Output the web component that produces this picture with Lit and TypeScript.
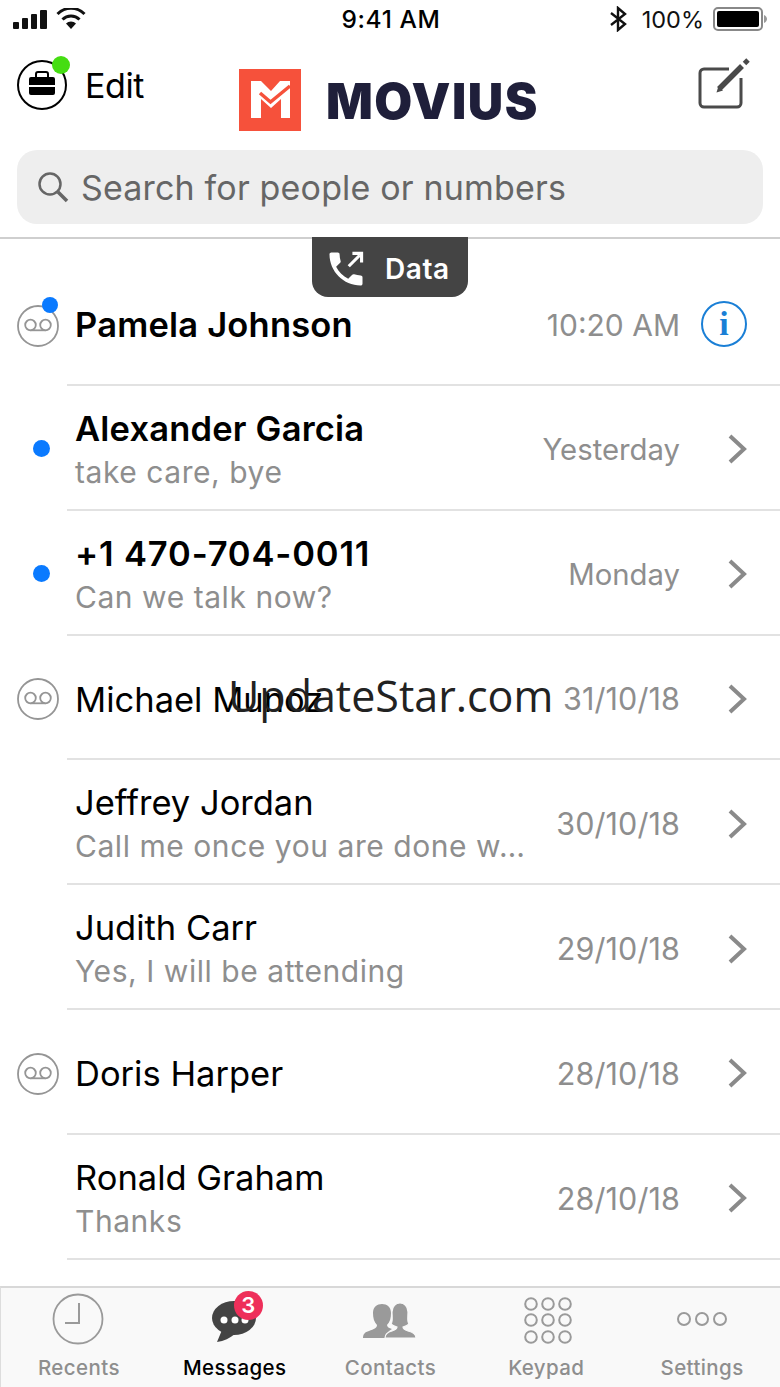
import { LitElement, html, css, svg } from "lit";
import { customElement } from "lit/decorators.js";

const voicemail = html`<svg class="vm" width="42" height="42" viewBox="0 0 42 42" fill="none" stroke="#959595" stroke-width="1.800"><circle cx="21" cy="21" r="20"/><circle cx="13.500" cy="20" r="5.300"/><circle cx="28.500" cy="20" r="5.300"/><path d="M13.500 25.300h15"/></svg>`;
const chevron = html`<svg class="trail" width="100" height="30" viewBox="0 0 100 30" fill="none" stroke="#8a8a8a" stroke-width="4"><path d="M50 2l14 13-14 13"/></svg>`;
const info = html`<div class="info-wrap"><div class="info">i</div></div>`;

interface Row { name: string; sub?: string; date: string; bold?: boolean; mark?: "vm" | "dot"; }
const rows: Row[] = [
  { name: "Alexander Garcia", sub: "take care, bye", date: "Yesterday", bold: true, mark: "dot" },
  { name: "+1 470-704-0011", sub: "Can we talk now?", date: "Monday", bold: true, mark: "dot" },
  { name: "Michael Munoz", date: "31/10/18", mark: "vm" },
  { name: "Jeffrey Jordan", sub: "Call me once you are done w…", date: "30/10/18" },
  { name: "Judith Carr", sub: "Yes, I will be attending", date: "29/10/18" },
  { name: "Doris Harper", date: "28/10/18", mark: "vm" },
  { name: "Ronald Graham", sub: "Thanks", date: "28/10/18" },
];

@customElement("app-root")
export class AppRoot extends LitElement {
  static styles = css`
    :host { display: block; width: 780px; height: 1387px; position: relative; overflow: hidden; background: #fff; font-family: Inter, "Liberation Sans", sans-serif; color: #000; }
    .status { height: 38px; display: grid; grid-template-columns: 1fr auto 1fr; align-items: center; padding: 0 11px 0 13px; box-sizing: border-box; }
    .status-left { display: flex; align-items: center; gap: 8px; }
    .time { font-size: 24.500px; font-weight: 500; letter-spacing: 0.6px; }
    .status-right { display: flex; justify-content: flex-end; align-items: center; gap: 10px; font-size: 23.500px; color: #111; }
    .status-right span { margin-left: 5px; }
    .status-right .batt { margin-left: -1px; }
    .nav { height: 112px; display: flex; align-items: flex-start; padding-left: 17px; box-sizing: border-box; }
    .brief { position: relative; width: 50px; height: 50px; margin-top: 22px; flex: none; }
    .green { position: absolute; left: 35px; top: -4px; width: 18px; height: 18px; border-radius: 50%; background: #45dd12; }
    .edit { font-size: 34px; margin: 29px 0 0 18px; width: 154px; line-height: 38px; letter-spacing: -0.4px; flex: none; }
    .logo { display: flex; align-items: center; margin-top: 31px; flex: none; width: 459px; }
    .wordmark { font-size: 49px; font-weight: 900; color: #1f1f3a; margin-left: 25px; padding-top: 3px; line-height: 59px; letter-spacing: 1.500px; }
    .search { margin: 0 17px; height: 74px; border-radius: 20px; background: #eeeeee; display: flex; align-items: center; padding-left: 20px; box-sizing: border-box; gap: 12px; color: #666; font-size: 34px; letter-spacing: 0.17px; }
    .list { margin-top: 13px; border-top: 2px solid #cfcfcf; position: relative; }
    .row { display: flex; height: 124.800px; box-sizing: border-box; }
    .row.first { height: 147px; }
    .mark { width: 67px; flex: none; position: relative; display: flex; align-items: center; padding: 3px 0 0 17px; box-sizing: border-box; }
    .first .mark { padding-top: 26px; }
    .main { flex: 1; display: flex; align-items: center; border-bottom: 2px solid #e2e2e2; padding: 4px 0 0 8px; min-width: 0; }
    .first .main { padding-top: 24px; }
    .text { flex: 1; min-width: 0; padding-top: 3px; }
    .name { font-size: 34.500px; line-height: 43px; margin: -1px 0 1px; white-space: nowrap; }
    .bold .name { font-weight: 600; letter-spacing: 0.2px; }
    .bold .name.phone { letter-spacing: 0.85px; }
    .sub { font-size: 30px; line-height: 43px; color: #8e8e8e; letter-spacing: 0.55px; white-space: nowrap; }
    .date { font-size: 29.300px; color: #8e8e8e; white-space: nowrap; }
    .date.numeric { font-size: 30.500px; letter-spacing: 0.1px; }
    .first .date { font-size: 30px; padding-top: 2px; }
    .trail { flex: none; }
    .info-wrap { width: 100px; flex: none; display: flex; justify-content: flex-end; padding-right: 33px; box-sizing: border-box; }
    .info { width: 42px; height: 42px; border: 2px solid #1a7fd6; border-radius: 50%; color: #1a7fd6; font-family: "Liberation Serif", serif; font-weight: 700; font-size: 34px; line-height: 42px; text-align: center; }
    .dot { position: absolute; width: 17px; height: 17px; border-radius: 50%; background: #0a7aff; left: 33px; top: 54px; }
    .vmdot { left: 42px; top: 58px; width: 16px; height: 16px; }
    .badge { position: absolute; left: 312px; top: -2px; width: 156px; height: 60px; background: #444; border-radius: 0 0 16px 16px; color: #fff; display: flex; align-items: center; gap: 17px; padding: 3px 0 0 12px; box-sizing: border-box; font-size: 28px; font-weight: 600; letter-spacing: 0.6px; }
    .water { position: absolute; left: 228px; top: 666px; font-family: "Open Sans", sans-serif; font-size: 43px; line-height: 60px; color: #222; white-space: nowrap; }
    .tabs { position: absolute; left: 0; right: 0; bottom: 0; height: 101px; background: #f9f9f9; border-top: 2px solid #d8d8d8; border-left: 1px solid #ddd; box-sizing: border-box; display: grid; grid-template-columns: repeat(5, 1fr); }
    .tab { display: flex; flex-direction: column; align-items: center; color: #8e8e8e; font-size: 20.500px; font-weight: 500; letter-spacing: 0.4px; position: relative; }
    .tab.on { color: #000; }
    .tab svg { height: 60px; width: 70px; flex: none; margin-top: 2px; }
    .tab span { line-height: 26px; margin-top: 5px; }
    .count { position: absolute; left: 77px; top: 3px; width: 29px; height: 29px; border-radius: 50%; background: #ee2f5a; color: #fff; font-size: 22px; font-weight: 600; line-height: 29px; text-align: center; letter-spacing: 0; }
    .compose { flex: none; margin-top: 21px; overflow: visible; }
  `;

  private rowTpl(r: Row) {
    const numericDate = /^\d/.test(r.date);
    const phone = r.name.startsWith("+");
    return html`<div class="row ${r.bold ? "bold" : ""}">
      <div class="mark">${r.mark === "vm" ? voicemail : ""}${r.mark === "dot" ? html`<div class="dot"></div>` : ""}</div>
      <div class="main">
        <div class="text"><div class="name ${phone ? "phone" : ""}">${r.name}</div>${r.sub ? html`<div class="sub">${r.sub}</div>` : ""}</div>
        <div class="date ${numericDate ? "numeric" : ""}">${r.date}</div>${chevron}
      </div>
    </div>`;
  }

  render() {
    return html`
      <div class="status">
        <div class="status-left">
          <svg width="35" height="20" viewBox="0 0 35 20" fill="#111"><rect x="0" y="13" width="6" height="7" rx="1"/><rect x="9" y="9" width="6" height="11" rx="1"/><rect x="18" y="5" width="6" height="15" rx="1"/><rect x="27" y="1" width="7" height="19" rx="1"/></svg>
          <svg width="30" height="22" viewBox="0 0 30 22"><path d="M15 21l-5-5.500a7 7 0 0110 0z" fill="#111"/><path d="M6.500 11.500a12 12 0 0117 0" fill="none" stroke="#111" stroke-width="3"/><path d="M1.500 6a19 19 0 0127 0" fill="none" stroke="#111" stroke-width="3"/></svg>
        </div>
        <div class="time">9:41 AM</div>
        <div class="status-right">
          <svg width="18" height="26" viewBox="0 0 18 26" fill="none" stroke="#111" stroke-width="2.400"><path d="M2 7l14 11-7 6V2l7 6-14 11"/></svg>
          <span>100%</span>
          <svg class="batt" width="56" height="24" viewBox="0 0 56 24"><rect x="1" y="1" width="48" height="22" rx="4" fill="none" stroke="#888" stroke-width="2"/><rect x="4" y="4" width="42" height="16" rx="2" fill="#000"/><path d="M51 8c2 1 3 2.500 3 4s-1 3-3 4z" fill="#999"/></svg>
        </div>
      </div>
      <div class="nav">
        <div class="brief">
          <svg width="50" height="50" viewBox="0 0 50 50"><circle cx="25" cy="25" r="24" fill="#fff" stroke="#000" stroke-width="2"/><path d="M19 17v-3a2 2 0 012-2h8a2 2 0 012 2v3" fill="none" stroke="#000" stroke-width="2"/><path d="M14 17h22a2 2 0 012 2v6H12v-6a2 2 0 012-2zM12 27h26v6a2 2 0 01-2 2H14a2 2 0 01-2-2z" fill="#000"/></svg>
          <div class="green"></div>
        </div>
        <div class="edit">Edit</div>
        <div class="logo">
          <svg width="62" height="62" viewBox="0 0 62 62" style="flex:none"><rect width="62" height="62" fill="#f6513b"/><path d="M12 12h10l10 10 9-10h10v37h-9V30l-10 9-10-9v19H12z" fill="#fff"/><path d="M21 24l10.500 9L51 17" fill="none" stroke="#f6513b" stroke-width="3.500"/></svg>
          <span class="wordmark">MOVIUS</span>
        </div>
        <svg class="compose" width="54" height="54" viewBox="0 0 54 54" fill="none" stroke="#4a4a4a"><path d="M31 10H6a4 4 0 00-4 4v30a4 4 0 004 4h33a4 4 0 004-4V19" stroke-width="3"/><path d="M21 30L44 7" stroke-width="5.500"/><path d="M46.500 4.500L50 1" stroke-width="5"/><path d="M18.500 33.500l2-6.500 4.500 4.500z" fill="#4a4a4a" stroke="none"/></svg>
      </div>
      <div class="search">
        <svg width="32" height="32" viewBox="0 0 32 32" fill="none" stroke="#666" stroke-width="2.500" style="flex:none"><circle cx="13" cy="13" r="10.500"/><path d="M21 21l9 9" stroke-width="3.500"/></svg>
        <span>Search for people or numbers</span>
      </div>
      <div class="list">
        <div class="row first bold">
          <div class="mark">${voicemail}<div class="dot vmdot"></div></div>
          <div class="main"><div class="text"><div class="name">Pamela Johnson</div></div><div class="date">10:20 AM</div>${info}</div>
        </div>
        ${rows.map((r) => this.rowTpl(r))}
        <div class="badge">
          <svg width="44" height="44" viewBox="0 0 24 24" fill="#fff" style="flex:none"><path d="M20 15.500c-1.250 0-2.450-.2-3.570-.57-.35-.11-.74-.03-1.020.24l-2.200 2.200c-2.830-1.440-5.150-3.750-6.590-6.590l2.200-2.210c.28-.26.36-.65.25-1-.37-1.120-.57-2.320-.57-3.570 0-.55-.45-1-1-1H4c-.55 0-1 .45-1 1 0 9.390 7.610 17 17 17 .55 0 1-.45 1-1V16.500c0-.55-.45-1-1-1z"/><path d="M13.500 10.500L19.500 4.500M15.500 3.500h5v5" fill="none" stroke="#fff" stroke-width="1.700"/></svg>
          <span>Data</span>
        </div>
      </div>
      <div class="water">UpdateStar.com</div>
      <div class="tabs">
        <div class="tab"><svg viewBox="0 0 70 60" fill="none" stroke="#9a9a9a" stroke-width="1.800"><circle cx="34" cy="29" r="24.500"/><path d="M35 13v20H21" stroke-width="2"/></svg><span>Recents</span></div>
        <div class="tab on"><svg viewBox="0 0 70 60" fill="#444"><ellipse cx="34" cy="28" rx="22" ry="17"/><path d="M22 40l-5 12c7-1 13-4 18-8z"/><g fill="#fff"><circle cx="24" cy="30" r="3.500"/><circle cx="35" cy="30" r="3.500"/><circle cx="45" cy="30" r="3.500"/></g></svg><div class="count">3</div><span>Messages</span></div>
        <div class="tab"><svg viewBox="0 0 70 60" fill="#9a9a9a"><path d="M8 48c0-4 2-6 6-7 5-2 8-3 8-6-3-3-4-7-4-12 0-6 4-9 9-9s9 3 9 9c0 5-1 9-4 12 0 2 2 3 5 4-4 2-6 5-7 9z"/><path d="M30 48c0-4 3-6 7-7 3-1 5-2 5-4-3-1-5-2-6-3 2-2 1-7 1-12 0-6 4-9 8-9s8 3 8 9c0 5-1 10 1 12-1 1-3 2-6 3 0 2 2 3 5 4 4 1 8 3 8 7z" stroke="#f9f9f9" stroke-width="1.200"/></svg><span>Contacts</span></div>
        <div class="tab"><svg viewBox="0 0 70 60" fill="none" stroke="#9a9a9a" stroke-width="2">${[14, 30, 47].map((y) => [20, 37, 54].map((x) => svg`<circle cx=${x} cy=${y} r="5.800"/>`))}</svg><span>Keypad</span></div>
        <div class="tab"><svg viewBox="0 0 70 60" fill="none" stroke="#9a9a9a" stroke-width="2">${[17, 35, 53].map((x) => svg`<circle cx=${x} cy="29" r="6"/>`)}</svg><span>Settings</span></div>
      </div>
    `;
  }
}
